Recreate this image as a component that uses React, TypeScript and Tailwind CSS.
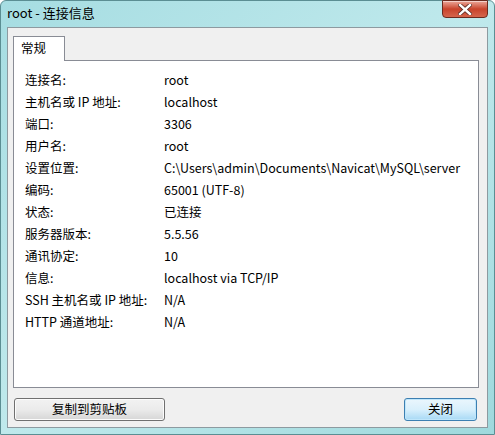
const rows: [string, string][] = [
  ["连接名:", "root"],
  ["主机名或 IP 地址:", "localhost"],
  ["端口:", "3306"],
  ["用户名:", "root"],
  ["设置位置:", "C:\\Users\\admin\\Documents\\Navicat\\MySQL\\server"],
  ["编码:", "65001 (UTF-8)"],
  ["状态:", "已连接"],
  ["服务器版本:", "5.5.56"],
  ["通讯协定:", "10"],
  ["信息:", "localhost via TCP/IP"],
  ["SSH 主机名或 IP 地址:", "N/A"],
  ["HTTP 通道地址:", "N/A"],
];

const font = { fontFamily: '"Noto Sans CJK SC", "Liberation Sans", sans-serif' };

export default function App() {
  return (
    <div
      className="w-[495px] h-[435px] flex flex-col border border-[#5b8e93] rounded-t-[6px] bg-gradient-to-br from-[#a6dde2] via-[#bfe9ec] to-[#9fd9dd] text-black"
      style={font}
    >
      {/* title bar */}
      <div className="h-[26px] flex items-start justify-between pl-[6px] pr-[6px]">
        <div className="pt-[4px] text-[13px] leading-[16px] text-black">root - 连接信息</div>
        <div className="w-[46px] h-[18px] -mt-px rounded-b-[4px] border border-[#6b2a1e] bg-gradient-to-b from-[#eba79a] via-[#c8432b] to-[#d5654c] flex items-center justify-center shadow-[inset_0_1px_0_rgba(255,255,255,0.5)]">
          <svg width="14" height="11" viewBox="0 0 14 11">
            <path d="M2 1 L12 10 M12 1 L2 10" stroke="#5a2a22" strokeWidth="4" strokeLinecap="square" />
            <path d="M2 1 L12 10 M12 1 L2 10" stroke="#ffffff" strokeWidth="2.4" strokeLinecap="square" />
          </svg>
        </div>
      </div>

      {/* client */}
      <div className="flex-1 mx-[6px] mb-[6px] border border-[#8d9aa0] bg-[#f0f0f0] flex flex-col pl-[5px] pr-[8px] pt-[8px] pb-[6px]">
        <div className="flex">
          <div className="h-[25px] w-[52px] border border-b-0 border-[#898c95] bg-white text-[12.5px] leading-[16px] pt-[3px] pl-[7px] -mb-px relative z-10">
            常规
          </div>
        </div>
        <div className="h-[328px] border border-[#898c95] bg-white pt-[8px] pl-[11px]">
          {rows.map(([k, v]) => (
            <div key={k} className="h-[22px] flex items-center text-[12.5px]">
              <div className="w-[139px]">{k}</div>
              <div>{v}</div>
            </div>
          ))}
        </div>
        <div className="mt-auto flex justify-between pl-px pr-[2px]">
          <button className="w-[151px] h-[23px] rounded-[3px] border border-[#707070] bg-gradient-to-b from-[#f2f2f2] via-[#ebebeb] to-[#d6d6d6] text-[12.5px] shadow-[inset_0_0_0_1px_#fcfcfc]">
            复制到剪贴板
          </button>
          <button className="w-[73px] h-[23px] rounded-[3px] border border-[#3c7fb1] bg-gradient-to-b from-[#eaf6fd] via-[#d9f0fc] to-[#a7d9f5] text-[12.5px] shadow-[inset_0_0_0_1px_#bfe6fb]">
            关闭
          </button>
        </div>
      </div>
    </div>
  );
}
